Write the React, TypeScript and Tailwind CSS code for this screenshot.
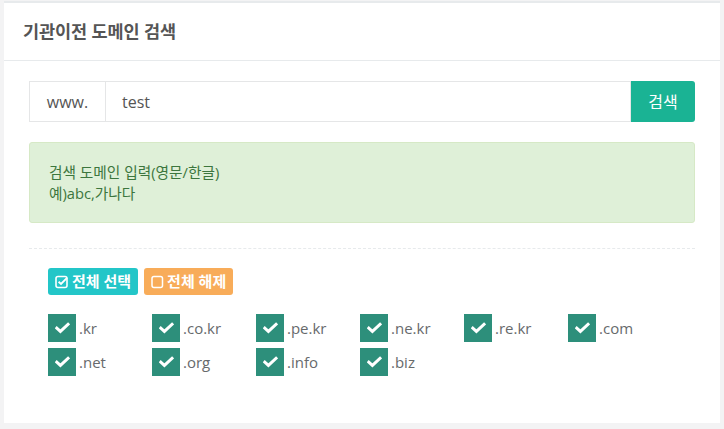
const domains = [".kr", ".co.kr", ".pe.kr", ".ne.kr", ".re.kr", ".com", ".net", ".org", ".info", ".biz"];

const font = { fontFamily: '"Open Sans", "Noto Sans CJK KR", sans-serif' };

function Check() {
  return (
    <svg width="15" height="12" viewBox="0 0 15 12" fill="none">
      <path d="M1.8 6.2 L5.4 9.4 L13 2.4" stroke="white" strokeWidth="3" strokeLinecap="square" />
    </svg>
  );
}

export default function App() {
  return (
    <div className="min-h-[429px] bg-[#f3f3f4] pt-px px-1" style={font}>
      <div className="w-[716px] bg-white border-t-2 border-[#e7eaec]">
        <div className="h-[58px] border-b border-[#e7eaec] flex items-center pl-[19px]">
          <h1 className="text-[17.5px] font-bold text-[#555] tracking-[-0.1px]">기관이전 도메인 검색</h1>
        </div>

        <div className="px-[25px] pt-[20px] pb-[47px]">
          <div className="flex h-[41px]">
            <div className="w-[77px] border border-[#e5e6e7] flex items-center justify-center text-[16px] text-[#555]">
              www.
            </div>
            <div className="flex-1 border-y border-r border-[#e5e6e7] flex items-center pl-[16px] text-[16px] text-[#555]">
              test
            </div>
            <button className="w-[64px] bg-[#1ab394] text-white text-[16px] rounded-r-[3px]">검색</button>
          </div>

          <div className="mt-[20px] bg-[#dff0d8] border border-[#d6e9c6] rounded-[3px] px-[19px] pt-[19px] pb-[18px] text-[14.7px] leading-[21px] text-[#3c763d]">
            <p>검색 도메인 입력(영문/한글)</p>
            <p>예)abc,가나다</p>
          </div>

          <div className="mt-[25px] border-t border-dashed border-[#e7eaec]" />

          <div className="pl-[19px] pt-[19px]">
            <div className="flex gap-[6px]">
              <button className="h-[27px] px-[7px] rounded-[3px] bg-[#23c6c8] text-white text-[15px] font-bold flex items-center gap-[3px]">
                <svg width="14" height="14" viewBox="0 0 14 14" fill="none">
                  <rect x="1" y="1.5" width="11" height="11" rx="2" stroke="white" strokeWidth="1.6" />
                  <path d="M3.6 6.8 L6 9 L12 2.8" stroke="white" strokeWidth="1.9" />
                </svg>
                전체 선택
              </button>
              <button className="h-[27px] px-[7px] rounded-[3px] bg-[#f8ac59] text-white text-[15px] font-bold flex items-center gap-[3px]">
                <svg width="13" height="14" viewBox="0 0 13 14" fill="none">
                  <rect x="1" y="1.5" width="10.5" height="11" rx="2" stroke="white" strokeWidth="1.5" />
                </svg>
                전체 해제
              </button>
            </div>

            <div className="mt-[19px] grid grid-cols-[repeat(6,104px)] gap-y-[6px]">
              {domains.map((d) => (
                <label key={d} className="flex items-center h-[28px]">
                  <span className="w-[28px] h-[28px] bg-[#2d8f7b] flex items-center justify-center">
                    <Check />
                  </span>
                  <span className="ml-[3px] text-[15px] text-[#676a6c]">{d}</span>
                </label>
              ))}
            </div>
          </div>
        </div>
      </div>
    </div>
  );
}
